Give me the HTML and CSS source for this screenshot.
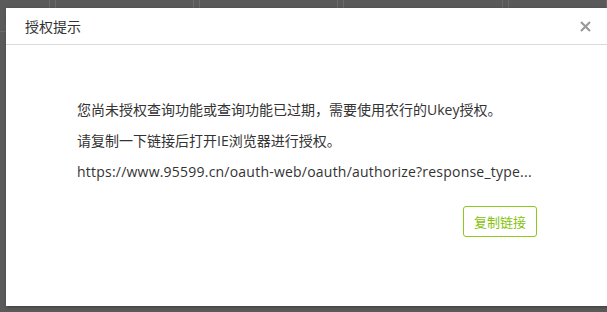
FILE: index.html
```html
<!DOCTYPE html>
<html lang="zh-CN">
<head>
<meta charset="utf-8">
<title>授权提示</title>
<link rel="stylesheet" href="styles.css">
</head>
<body>
<div class="page">
  <div class="cards">
    <div class="card c1"></div>
    <div class="card c2"></div>
    <div class="card c3"></div>
    <div class="card c4"></div>
    <div class="card c5"></div>
  </div>
</div>
<div class="dialog">
  <div class="dialog-head">
    <span class="dialog-title">授权提示</span>
    <span class="dialog-close">
      <svg width="11" height="11" viewBox="0 0 11 11"><path d="M1 1L10 10M10 1L1 10" stroke="#9a9a9a" stroke-width="2.2" stroke-linecap="butt"/></svg>
    </span>
  </div>
  <div class="dialog-body">
    <p class="msg">您尚未授权查询功能或查询功能已过期，需要使用农行的Ukey授权。</p>
    <p class="msg">请复制一下链接后打开IE浏览器进行授权。</p>
    <p class="msg link">https://www.95599.cn/oauth-web/oauth/authorize?response_type...</p>
    <div class="actions">
      <button class="btn-copy">复制链接</button>
    </div>
  </div>
</div>
</body>
</html>
```

FILE: styles.css
```css
html, body {
  margin: 0;
  padding: 0;
}
body {
  width: 607px;
  height: 312px;
  overflow: hidden;
  background: #5a5a5a;
  font-family: "Open Sans", "Noto Sans CJK SC", sans-serif;
  position: relative;
}
.page {
  height: 312px;
}
.cards {
  display: flex;
  gap: 5px;
  margin-left: -10px;
  margin-top: -10px;
}
.card {
  height: 40px;
  border: 1px solid #6a6a6a;
  border-radius: 2px;
}
.c1 { width: 60px; }
.c2 { width: 141px; }
.c3 { width: 141px; }
.c4 { width: 163px; }
.c5 { width: 100px; }

.dialog {
  position: absolute;
  left: 6px;
  top: 8px;
  width: 605px;
  height: 298px;
  background: #fff;
  box-shadow: 1px 1px 3px rgba(0, 0, 0, 0.35);
}
.dialog-head {
  height: 36px;
  border-bottom: 1px solid #d9d9d9;
  display: flex;
  align-items: center;
  justify-content: space-between;
  padding: 0 20px 0 19px;
}
.dialog-title {
  font-size: 14px;
  color: #333;
}
.dialog-close {
  display: flex;
  align-items: center;
}
.dialog-body {
  padding: 55px 0 0 71px;
}
.msg {
  margin: 0 0 11px 0;
  font-size: 14px;
  line-height: 20px;
  color: #333;
}
.link {
  white-space: nowrap;
  letter-spacing: 0.22px;
}
.actions {
  display: flex;
  justify-content: flex-end;
  width: 460px;
  margin-top: 24px;
}
.btn-copy {
  box-sizing: border-box;
  width: 74px;
  height: 31px;
  border: 1px solid #8cc81e;
  border-radius: 3px;
  background: #fff;
  color: #85c20a;
  font-family: "Noto Sans CJK SC", sans-serif;
  font-size: 13px;
  padding: 0;
}
```
